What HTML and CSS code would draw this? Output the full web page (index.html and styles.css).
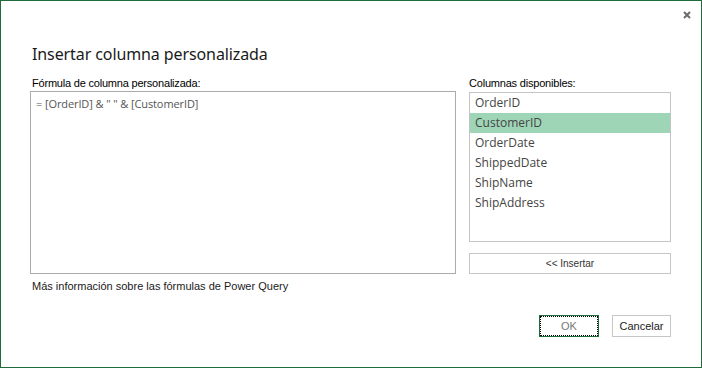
FILE: index.html
```html
<!DOCTYPE html>
<html lang="es">
<head>
    <meta charset="UTF-8">
    <title>Insertar columna personalizada</title>
    <link rel="stylesheet" href="styles.css">
</head>
<body>
    <div class="dialog">
        <div class="topbar">
            <span class="close" title="Cerrar">
                <svg width="8" height="8" viewBox="0 0 8 8"><path d="M1 1 L7 7 M7 1 L1 7" stroke="#6b6b6b" stroke-width="2"/></svg>
            </span>
        </div>
        <h1 class="title">Insertar columna personalizada</h1>

        <div class="main">
            <div class="left-col">
                <label class="field-label" for="formula">Fórmula de columna personalizada:</label>
                <div class="formula-box" id="formula">= [OrderID] &amp; " " &amp; [CustomerID]</div>
                <a class="help-link" href="#">Más información sobre las fórmulas de Power Query</a>
            </div>
            <div class="right-col">
                <div class="field-label">Columnas disponibles:</div>
                <ul class="column-list">
                    <li>OrderID</li>
                    <li class="selected">CustomerID</li>
                    <li>OrderDate</li>
                    <li>ShippedDate</li>
                    <li>ShipName</li>
                    <li>ShipAddress</li>
                </ul>
                <button class="btn insert-btn">&lt;&lt; Insertar</button>
            </div>
        </div>

        <div class="footer">
            <button class="btn ok-btn">OK</button>
            <button class="btn">Cancelar</button>
        </div>
    </div>
</body>
</html>
```

FILE: styles.css
```css
body {
    margin: 0;
    background-color: #ffffff;
    font-family: "Liberation Sans", Arial, sans-serif;
    color: #000;
}
.dialog {
    width: 702px;
    height: 368px;
    box-sizing: border-box;
    border: 1px solid #1e6b3c;
    padding: 0 30px 0 29px;
    display: flex;
    flex-direction: column;
}
.topbar {
    height: 28px;
    display: flex;
    justify-content: flex-end;
    align-items: flex-start;
    margin-right: -20px;
}
.close {
    display: block;
    width: 8px;
    height: 8px;
    margin-top: 10px;
    cursor: pointer;
}
.close svg {
    display: block;
}
.title {
    margin: 11px 0 0 2px;
    height: 28px;
    font-family: "Noto Sans", "Open Sans", sans-serif;
    font-weight: normal;
    font-size: 16px;
    line-height: 28px;
    letter-spacing: -0.1px;
    color: #1a1a1a;
}
.main {
    display: flex;
    gap: 13px;
    margin-top: 8px;
}
.left-col {
    width: 426px;
    display: flex;
    flex-direction: column;
}
.right-col {
    width: 202px;
    display: flex;
    flex-direction: column;
}
.field-label {
    display: block;
    font-size: 11px;
    line-height: 15px;
    height: 15px;
    padding-left: 2px;
    letter-spacing: -0.2px;
}
.right-col .field-label {
    padding-left: 0;
    height: 16px;
}
.formula-box {
    height: 183px;
    box-sizing: border-box;
    border: 1px solid #ababab;
    padding: 5px 5px;
    font-family: "Open Sans", "Noto Sans", sans-serif;
    font-size: 11px;
    line-height: 14px;
    letter-spacing: -0.1px;
    color: #555;
}
.help-link {
    margin-top: 5px;
    padding-left: 2px;
    font-size: 11px;
    line-height: 14px;
    color: #1a1a1a;
    text-decoration: none;
}
.column-list {
    list-style: none;
    margin: 0;
    padding: 0;
    height: 150px;
    box-sizing: border-box;
    border: 1px solid #c4c4c4;
}
.column-list li {
    height: 20px;
    line-height: 20px;
    padding-left: 5px;
    font-family: "Open Sans", "Noto Sans", sans-serif;
    font-size: 12px;
    color: #444;
}
.column-list li.selected {
    background-color: #9fd5b7;
}
.btn {
    height: 22px;
    width: 59px;
    padding: 0;
    background-color: #fff;
    border: 1px solid #c6c6c6;
    font-family: "Liberation Sans", Arial, sans-serif;
    font-size: 11px;
    color: #222;
    cursor: pointer;
}
.insert-btn {
    width: 202px;
    height: 21px;
    margin-top: 11px;
    font-size: 10px;
    color: #333;
}
.footer {
    display: flex;
    justify-content: flex-end;
    gap: 13px;
    margin-top: 22px;
}
.ok-btn {
    width: 60px;
    border-color: #1e6b3c;
    outline: 1px dotted #000;
    outline-offset: -2px;
    color: #777;
}
```
